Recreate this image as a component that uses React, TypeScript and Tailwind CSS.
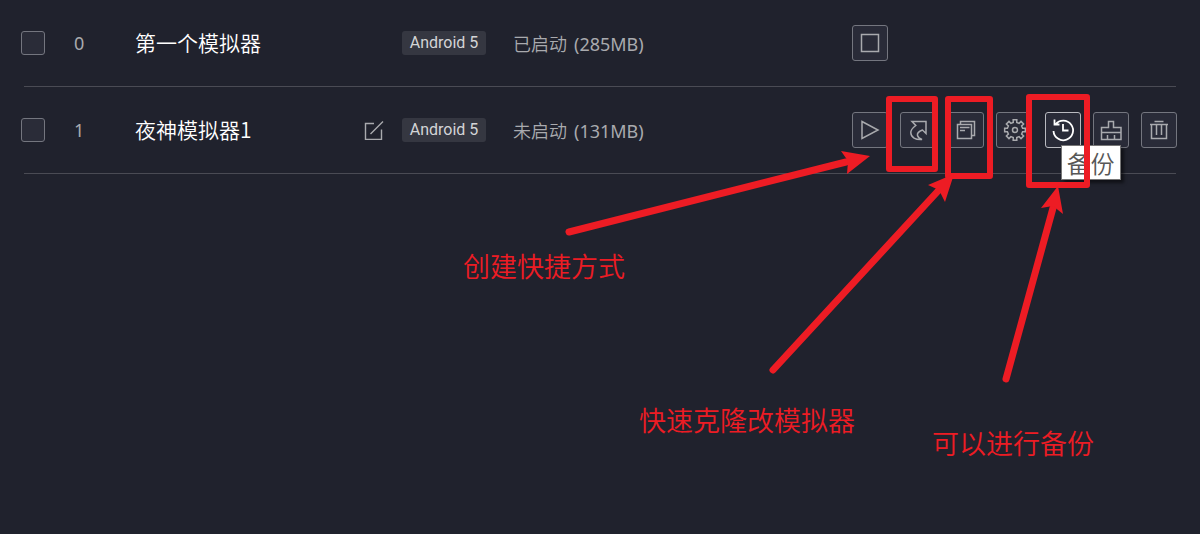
import { useState } from "react";
import type { ReactNode } from "react";

type Action = { label: string; icon: ReactNode; tooltip?: boolean };

type Emulator = {
  id: number;
  name: string;
  version: string;
  state: string;
  memory: string;
  editable: boolean;
  actions: Action[];
};

function Icon({ children }: { children: ReactNode }) {
  return (
    <svg
      viewBox="0 0 34 34"
      className="size-[34px]"
      fill="none"
      stroke="currentColor"
      strokeWidth="1.5"
      aria-hidden="true"
    >
      {children}
    </svg>
  );
}

// Outline of a gear with 8 flat teeth
function gearPath(cx: number, cy: number, outer: number, inner: number) {
  const points: string[] = [];
  for (let i = 0; i < 8; i++) {
    const steps = [
      [-13, inner],
      [-10, outer],
      [10, outer],
      [13, inner],
    ];
    for (const [offset, radius] of steps) {
      const angle = ((i * 45 + offset) * Math.PI) / 180;
      const x = cx + radius * Math.cos(angle);
      const y = cy + radius * Math.sin(angle);
      points.push(`${x.toFixed(2)} ${y.toFixed(2)}`);
    }
  }
  return `M${points.join("L")}Z`;
}

const stopIcon = (
  <Icon>
    <path d="M8.5 8.5h17v17h-17z" />
  </Icon>
);

const playIcon = (
  <Icon>
    <path d="M9 8.5 25 17 9 25.5z" />
  </Icon>
);

const shortcutIcon = (
  <Icon>
    <path d="M11 8.5H25V20.5L21.5 17C17.500 18.500 16 20.500 16.500 22.500C17 24.500 18.500 25.500 21 26.500C14.500 27 10 24.500 9.800 19.800C9.700 17 11.500 14.800 14.800 12.500Z" />
  </Icon>
);

const cloneIcon = (
  <Icon>
    <path d="M8.5 11.5h14v14h-14zM11.5 11.5v-3h14v14h-3M11 14.5h9.5M11 17.5h5" />
  </Icon>
);

const settingsIcon = (
  <Icon>
    <path d={gearPath(18, 17, 10.5, 7.8)} />
    <circle cx="18" cy="17" r="2.5" />
  </Icon>
);

const backupIcon = (
  <Icon>
    <path
      d="M9.5 11.5A9.8 9.8 0 1 1 7.5 18M8.5 6.5V11.5H13.5M17 11V17.5H22.5"
      strokeWidth="1.8"
    />
  </Icon>
);

const cleanIcon = (
  <Icon>
    <path d="M14.5 14.5V8.5h5v6h7.5v12H7.5v-12zM7.5 19.5H27M13.5 26.5V22M20.5 26.5V22" />
  </Icon>
);

const deleteIcon = (
  <Icon>
    <path d="M12.5 8.5h9M8 11.5h18M9.5 11.5v14h15v-14M14.5 11.5V22M19.5 11.5V22" />
  </Icon>
);

const emulators: Emulator[] = [
  {
    id: 0,
    name: "第一个模拟器",
    version: "Android 5",
    state: "已启动",
    memory: "285MB",
    editable: false,
    actions: [{ label: "停止", icon: stopIcon }],
  },
  {
    id: 1,
    name: "夜神模拟器1",
    version: "Android 5",
    state: "未启动",
    memory: "131MB",
    editable: true,
    actions: [
      { label: "启动", icon: playIcon },
      { label: "快捷方式", icon: shortcutIcon },
      { label: "克隆", icon: cloneIcon },
      { label: "设置", icon: settingsIcon },
      { label: "备份", icon: backupIcon, tooltip: true },
      { label: "清理", icon: cleanIcon },
      { label: "删除", icon: deleteIcon },
    ],
  },
];

function ActionButton({ action }: { action: Action }) {
  return (
    <div className="relative">
      <button
        type="button"
        aria-label={action.label}
        className={
          action.tooltip
            ? "block size-9 rounded-[3px] border border-[#b9bac0] bg-[#292b38] text-white"
            : "block size-9 rounded-[3px] border border-[#74767f] bg-[#292b38] text-[#a9aaae]"
        }
      >
        {action.icon}
      </button>
      {action.tooltip && (
        <div
          role="tooltip"
          className="absolute top-[33px] left-4 z-10 border border-[#767676] bg-white px-[5px] text-2xl leading-[33px] font-[350] whitespace-nowrap text-[#575757] shadow-[3px_3px_3px_rgba(0,0,0,0.5)]"
        >
          {action.label}
        </div>
      )}
    </div>
  );
}

function EmulatorRow({ emulator }: { emulator: Emulator }) {
  const [checked, setChecked] = useState(false);

  return (
    <li>
      <div className="flex h-[86px] items-center pr-[23px] pl-[21px]">
        <div className="w-[53px] shrink-0">
          <input
            type="checkbox"
            aria-label={emulator.name}
            checked={checked}
            onChange={(e) => setChecked(e.target.checked)}
            className="block size-6 appearance-none rounded-[3px] border border-[#74767f] bg-[#2a2c38] checked:bg-[#74767f]"
          />
        </div>
        <span className="w-[61px] shrink-0 font-['Noto_Sans',sans-serif] text-lg text-[#a9aaae]">
          {emulator.id}
        </span>
        <span className="w-[229px] shrink-0 text-[21px] font-[350] whitespace-nowrap text-white">
          {emulator.name}
        </span>
        <div className="w-[38px] shrink-0">
          {emulator.editable && (
            <button type="button" aria-label="重命名" className="block text-[#a9aaae]">
              <svg
                viewBox="0 0 20 20"
                className="size-5"
                fill="none"
                stroke="currentColor"
                strokeWidth="1.4"
                aria-hidden="true"
              >
                <path d="M10 3.5H1.5v16h16v-10M6.5 14 19 1.5" />
              </svg>
            </button>
          )}
        </div>
        <div className="w-[111px] shrink-0">
          <span className="block h-6 w-[84px] rounded-[3px] bg-[#353741] text-center font-[Roboto,sans-serif] text-base leading-6 text-[#d3d4d6]">
            {emulator.version}
          </span>
        </div>
        <div className="flex flex-1 gap-[7px] pt-px font-['Noto_Sans','Noto_Sans_CJK_SC',sans-serif] text-lg whitespace-nowrap text-[#a9aaae]">
          <span className="font-[350]">{emulator.state}</span>
          <span>({emulator.memory})</span>
        </div>
        <div
          className={
            emulator.actions.length > 1
              ? "flex w-[325px] shrink-0 justify-between"
              : "flex w-[325px] shrink-0"
          }
        >
          {emulator.actions.map((action) => (
            <ActionButton key={action.label} action={action} />
          ))}
        </div>
      </div>
      <hr className="mx-6 border-[#4a4b54]" />
    </li>
  );
}

// Tutorial marks drawn over the list, kept in line with the action buttons
function Annotations() {
  return (
    <div className="pointer-events-none absolute top-0 right-0 z-20 h-[534px] w-[1200px] text-[27px] leading-9 font-[350] whitespace-nowrap text-[#ed1c24]">
      <svg viewBox="0 0 1200 534" className="h-full w-full" aria-hidden="true">
        <g fill="none" stroke="currentColor" strokeWidth="6" strokeLinejoin="round">
          <rect x="889" y="99" width="46" height="70" />
          <rect x="948" y="99" width="42" height="77" />
          <rect x="1029" y="97" width="58" height="88" />
        </g>
        <g stroke="currentColor" strokeWidth="7" strokeLinecap="round">
          <path d="M569 232 846 162" />
          <path d="M773 370 938 191" />
          <path d="M1006 379 1053 208" />
        </g>
        <g fill="currentColor">
          <path d="M870 156 841 151 848 161 847 174z" />
          <path d="M954 174 928 185 939 190 945 202z" />
          <path d="M1058 186 1041 208 1053 206 1063 214z" />
        </g>
      </svg>
      <span className="absolute top-[248px] left-[463px]">创建快捷方式</span>
      <span className="absolute top-[402px] left-[639px]">快速克隆改模拟器</span>
      <span className="absolute top-[425px] left-[932px]">可以进行备份</span>
    </div>
  );
}

export default function App() {
  return (
    <main className="relative min-h-screen overflow-hidden bg-[#20222d] font-['Noto_Sans_CJK_SC',sans-serif]">
      <ul>
        {emulators.map((emulator) => (
          <EmulatorRow key={emulator.id} emulator={emulator} />
        ))}
      </ul>
      <Annotations />
    </main>
  );
}
